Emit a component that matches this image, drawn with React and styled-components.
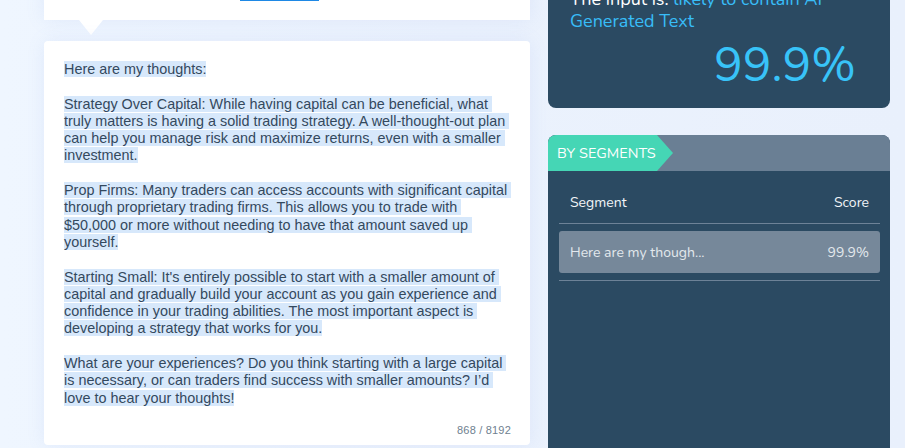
import React from "react";
import styled, { createGlobalStyle } from "styled-components";

const GlobalStyle = createGlobalStyle`
  html, body { margin: 0; padding: 0; }
  body {
    width: 905px;
    height: 448px;
    overflow: hidden;
    background: linear-gradient(90deg, #eff6ff 0%, #ebf2fd 50%, #e9f0fc 100%);
    font-family: "Liberation Sans", Arial, sans-serif;
  }
`;

const Page = styled.div`
  display: grid;
  grid-template-columns: 486px 342px;
  column-gap: 18px;
  padding-left: 44px;
  margin-top: -40px;
  align-items: start;
`;

const Column = styled.div`
  display: flex;
  flex-direction: column;
`;

const TopCard = styled.div`
  background: #ffffff;
  padding: 20px 20px 18px;
  box-shadow: 0 0 18px rgba(120, 150, 220, 0.12);
`;

const Intro = styled.div`
  font-size: 14px;
  line-height: 22px;
  color: #34495e;
  height: 22px;
  white-space: nowrap;
`;

const Link = styled.span`
  color: #1e88e5;
  border-bottom: 2px solid #1e88e5;
  margin-left: 10px;
  letter-spacing: 0.3px;
`;

const PointerRow = styled.div`
  height: 21px;
  padding-left: 35px;
`;

const Pointer = styled.div`
  width: 0;
  height: 0;
  border-left: 12px solid transparent;
  border-right: 12px solid transparent;
  border-top: 15px solid #ffffff;
`;

const TextCard = styled.div`
  background: #ffffff;
  border-radius: 4px;
  padding: 20px 19px 8px 20px;
  box-shadow: 0 0 18px rgba(120, 150, 220, 0.12);
  display: flex;
  flex-direction: column;
`;

const InputText = styled.div`
  font-family: "Liberation Sans", Arial, sans-serif;
  font-size: 14.4px;
  line-height: 17.3px;
  color: #34495e;
  white-space: pre-wrap;
`;

const Selected = styled.span`
  background: #d7e8fb;
`;

const Counter = styled.div`
  margin-top: 17px;
  align-self: flex-end;
  font-size: 11px;
  line-height: 13px;
  color: #6f7f8f;
  letter-spacing: 0.2px;
`;

const ResultCard = styled.div`
  background: #2b4a62;
  border-radius: 0 0 8px 8px;
  padding: 28px 34px 19px 22px;
  display: flex;
  flex-direction: column;
  font-family: "Nunito", Lato, "Open Sans", sans-serif;
`;

const Verdict = styled.div`
  font-size: 18px;
  line-height: 22px;
  color: #ffffff;
`;

const Highlight = styled.span`
  color: #38bdf8;
`;

const Score = styled.div`
  margin-top: 9px;
  align-self: flex-end;
  font-size: 48px;
  line-height: 48px;
  color: #38c3f8;
`;

const SegmentsCard = styled.div`
  margin-top: 27px;
  background: #2b4a62;
  border-radius: 8px 8px 0 0;
  overflow: hidden;
  height: 320px;
  font-family: "Nunito", Lato, "Open Sans", sans-serif;
`;

const TabBar = styled.div`
  height: 36px;
  background: #6a7f94;
  display: flex;
`;

const Tab = styled.div`
  width: 125px;
  height: 36px;
  background: #45d6b5;
  color: #ffffff;
  font-size: 14.5px;
  line-height: 36px;
  padding-left: 9px;
  box-sizing: border-box;
  text-transform: uppercase;
  white-space: nowrap;
  clip-path: polygon(0 0, calc(100% - 16px) 0, 100% 50%, calc(100% - 16px) 100%, 0 100%);
`;

const Table = styled.div`
  padding: 11px 10px 0 11px;
  display: flex;
  flex-direction: column;
`;

const Row = styled.div`
  display: flex;
  justify-content: space-between;
  align-items: center;
  height: ${(p) => (p.$head ? "41px" : "42px")};
  padding: 0 11px;
  font-size: 14px;
  color: ${(p) => (p.$head ? "#f2f5f8" : "#e3e8ed")};
  background: ${(p) => (p.$active ? "#76889a" : "transparent")};
  border-radius: ${(p) => (p.$active ? "3px" : "0")};
  margin: ${(p) => (p.$active ? "7px 0" : "0")};
`;

const Divider = styled.div`
  height: 1px;
  background: #6d8297;
`;

const text = [
  "Here are my thoughts:",
  "",
  "Strategy Over Capital: While having capital can be beneficial, what truly matters is having a solid trading strategy. A well-thought-out plan can help you manage risk and maximize returns, even with a smaller investment.",
  "",
  "Prop Firms: Many traders can access accounts with significant capital through proprietary trading firms. This allows you to trade with $50,000 or more without needing to have that amount saved up yourself.",
  "",
  "Starting Small: It's entirely possible to start with a smaller amount of capital and gradually build your account as you gain experience and confidence in your trading abilities. The most important aspect is developing a strategy that works for you.",
  "",
  "What are your experiences? Do you think starting with a large capital is necessary, or can traders find success with smaller amounts? I’d love to hear your thoughts!",
].join("\n");

export default function App() {
  return (
    <>
      <GlobalStyle />
      <Page>
        <Column>
          <TopCard>
            <Intro>
              Submitted by the user, see
              <Link>original post</Link>
            </Intro>
          </TopCard>
          <PointerRow>
            <Pointer />
          </PointerRow>
          <TextCard>
            <InputText>
              <Selected>{text}</Selected>
            </InputText>
            <Counter>868 / 8192</Counter>
          </TextCard>
        </Column>
        <Column>
          <ResultCard>
            <Verdict>
              The input is: <Highlight>likely to contain AI Generated Text</Highlight>
            </Verdict>
            <Score>99.9%</Score>
          </ResultCard>
          <SegmentsCard>
            <TabBar>
              <Tab>By Segments</Tab>
            </TabBar>
            <Table>
              <Row $head>
                <span>Segment</span>
                <span>Score</span>
              </Row>
              <Divider />
              <Row $active>
                <span>Here are my though...</span>
                <span>99.9%</span>
              </Row>
              <Divider />
            </Table>
          </SegmentsCard>
        </Column>
      </Page>
    </>
  );
}
